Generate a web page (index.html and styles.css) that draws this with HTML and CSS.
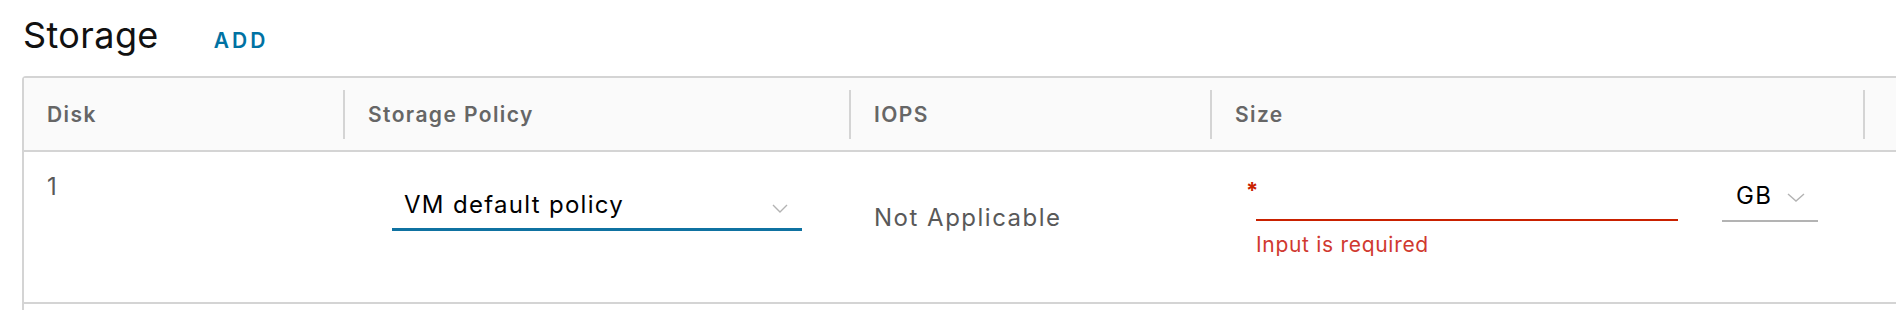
FILE: index.html
```html
<!DOCTYPE html>
<html lang="en">
<head>
    <meta charset="UTF-8">
    <meta name="viewport" content="width=device-width, initial-scale=1.0">
    <title>Storage</title>
    <link rel="stylesheet" href="styles.css">
</head>
<body>

    <div class="storage">
        <div class="storage-head">
            <h2 class="storage-title">Storage</h2>
            <button type="button" class="btn-link">ADD</button>
        </div>

        <div class="grid">
            <div class="grid-header">
                <div class="th"><span class="th-label">Disk</span></div>
                <div class="th"><span class="th-label">Storage Policy</span></div>
                <div class="th"><span class="th-label">IOPS</span></div>
                <div class="th"><span class="th-label">Size</span></div>
                <div class="th"><span class="th-label"></span></div>
            </div>

            <div class="grid-row">
                <div class="td td-disk">1</div>
                <div class="td td-policy">
                    <div class="select select-policy">
                        <span class="select-value">VM default policy</span>
                        <svg class="caret" width="16" height="9" viewBox="0 0 16 9"><polyline points="1,1 8,8 15,1" fill="none" stroke="#b3b3b3" stroke-width="1.4"/></svg>
                    </div>
                </div>
                <div class="td td-iops">Not Applicable</div>
                <div class="td td-size">
                    <span class="required">*</span>
                    <div class="field">
                        <input type="text" class="input input-error">
                        <div class="error-text">Input is required</div>
                    </div>
                    <div class="select select-unit">
                        <span class="select-value">GB</span>
                        <svg class="caret" width="18" height="9" viewBox="0 0 18 9"><polyline points="1,1 9,8 17,1" fill="none" stroke="#b3b3b3" stroke-width="1.4"/></svg>
                    </div>
                </div>
                <div class="td"></div>
            </div>

            <div class="grid-footer"></div>
        </div>
    </div>

</body>
</html>
```

FILE: styles.css
```css
body {
    font-family: Inter, "Open Sans", sans-serif;
    background-color: #fff;
    margin: 0;
    overflow: hidden;
}
.storage {
    padding-left: 22px;
}
.storage-head {
    display: flex;
    align-items: baseline;
    padding: 13px 0 0 1px;
    margin-bottom: 19px;
}
.storage-title {
    margin: 0;
    font-size: 36px;
    line-height: 44px;
    font-weight: 400;
    letter-spacing: 0.4px;
    color: #111;
}
.btn-link {
    margin-left: 55px;
    padding: 0;
    border: none;
    background: none;
    font-family: inherit;
    font-size: 21px;
    font-weight: 600;
    letter-spacing: 3px;
    color: #0072a3;
    cursor: pointer;
}

/* data grid */
.grid {
    width: 1960px;
    border: 2px solid #d4d4d4;
    border-radius: 4px;
}
.grid-header,
.grid-row {
    display: grid;
    grid-template-columns: 319px 506px 361px 653px 1fr;
}
.grid-header {
    background-color: #fafafa;
    border-bottom: 2px solid #d4d4d4;
}
.th {
    padding: 12px 0 11px;
}
.th-label {
    display: flex;
    align-items: center;
    height: 49px;
    padding-left: 23px;
    border-left: 2px solid #d4d4d4;
    font-size: 21px;
    font-weight: 600;
    letter-spacing: 1.4px;
    color: #666;
}
.th:first-child .th-label {
    border-left: none;
    padding-left: 23px;
}
.grid-row {
    height: 150px;
    border-bottom: 2px solid #d4d4d4;
}
.grid-footer {
    height: 60px;
}
.td {
    font-size: 24px;
    line-height: 29px;
    letter-spacing: 1.3px;
    color: #595959;
}
.td-disk {
    padding: 20px 0 0 23px;
}
.td-policy {
    padding-left: 49px;
}
.td-iops {
    padding: 51px 0 0 25px;
    letter-spacing: 1.5px;
}
.td-size {
    display: flex;
    align-items: flex-start;
    padding-left: 36px;
}

/* selects */
.select {
    display: flex;
    align-items: flex-start;
    color: #000;
    cursor: pointer;
}
.select-value {
    flex: 1;
}
.select-policy {
    width: 410px;
    box-sizing: border-box;
    margin-top: 34px;
    padding: 4px 14px 9px 12px;
    border-bottom: 3px solid #0f72a1;
}
.select-policy .caret {
    margin-top: 14px;
}
.select-unit {
    width: 96px;
    box-sizing: border-box;
    margin-top: 29px;
    margin-left: 44px;
    padding: 0 13px 10px 14px;
    border-bottom: 2px solid #b3b3b3;
}
.select-unit .caret {
    margin-top: 12px;
}

/* size input */
.required {
    width: 10px;
    margin-top: 27px;
    font-size: 22px;
    line-height: 22px;
    font-weight: 700;
    letter-spacing: 0;
    color: #c92100;
}
.input {
    display: block;
    width: 422px;
    height: 35px;
    box-sizing: border-box;
    margin-top: 34px;
    padding: 0;
    border: none;
    background: transparent;
    font-family: inherit;
    font-size: 24px;
    outline: none;
}
.input-error {
    border-bottom: 2px solid #c92100;
}
.error-text {
    margin-top: 11px;
    font-size: 21px;
    line-height: 25px;
    letter-spacing: 0.7px;
    color: #d0392f;
}
```
